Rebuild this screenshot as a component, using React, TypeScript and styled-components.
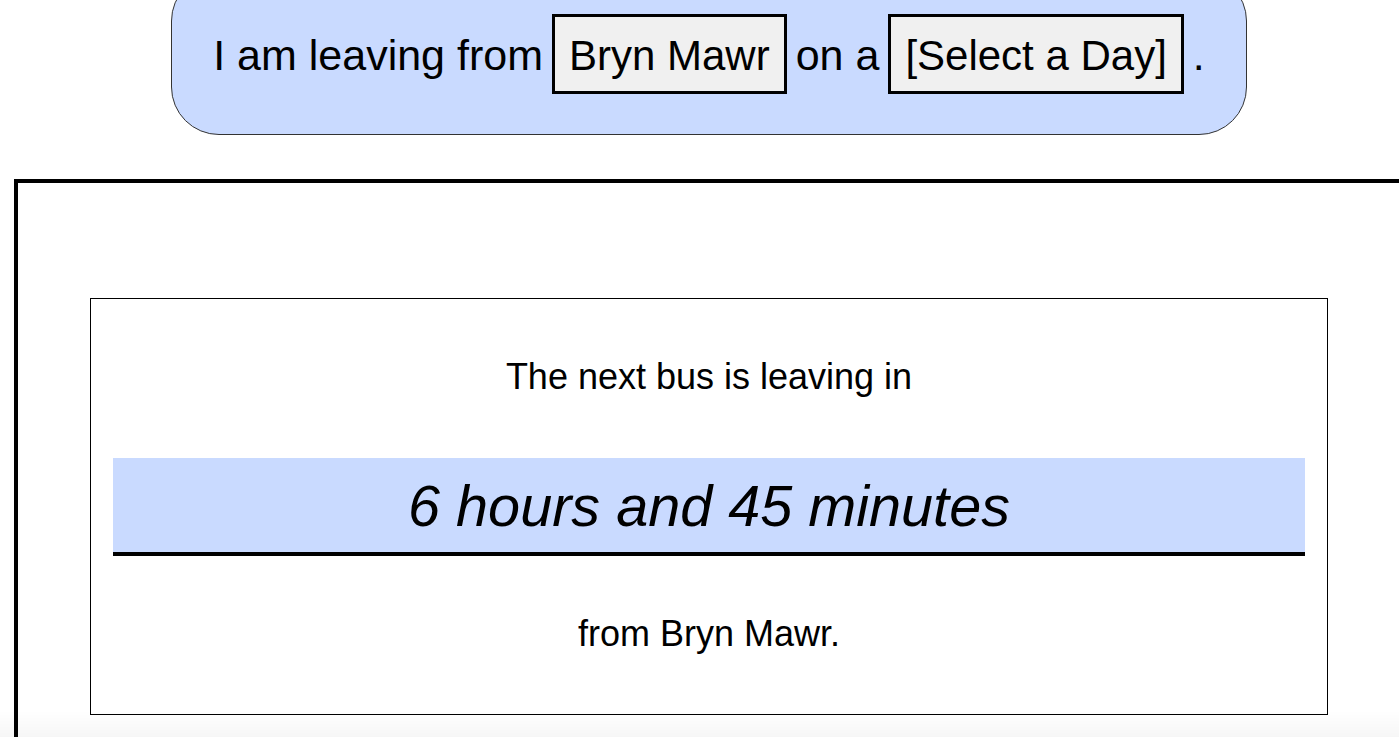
import React from "react";
import styled, { createGlobalStyle } from "styled-components";

const GlobalStyle = createGlobalStyle`
  html, body {
    margin: 0;
    padding: 0;
    overflow: hidden;
    background: #ffffff;
  }
  body {
    font-family: "Liberation Sans", Arial, sans-serif;
    color: #000;
  }
`;

const Page = styled.div`
  width: 1390px;
  margin-left: 14px;
  display: flex;
  flex-direction: column;
  align-items: center;
`;

const Pill = styled.div`
  width: 1076px;
  box-sizing: border-box;
  margin-top: -27px;
  padding: 40px 0;
  background: #c9daff;
  border: 1px solid #333;
  border-radius: 48px;
  display: flex;
  justify-content: center;
  align-items: baseline;
  gap: 9px;
  font-size: 43px;
`;

const Words = styled.span`
  white-space: pre;
`;

const Choice = styled.span`
  display: inline-block;
  box-sizing: border-box;
  height: 80px;
  padding: 15px 14px 0 14px;
  border: 3px solid #000;
  background: #f0f0f0;
  font-size: 42px;
  white-space: pre;
`;

const Panel = styled.div`
  align-self: stretch;
  margin-top: 44px;
  border: 4px solid #000;
  padding: 115px 72px 40px;
`;

const Card = styled.div`
  border: 1px solid #000;
  padding: 57px 22px 59px;
  display: flex;
  flex-direction: column;
  align-items: stretch;
`;

const Line = styled.p<{ $gap?: number }>`
  margin: ${(p) => p.$gap ?? 0}px 0 0;
  font-size: 36px;
  text-align: center;
`;

const Countdown = styled.div`
  margin-top: 60px;
  background: #c9daff;
  border-bottom: 4px solid #000;
  padding: 15px 0 13px;
  font-size: 57.6px;
  font-style: italic;
  text-align: center;
`;

const BottomShade = styled.div`
  position: fixed;
  left: 0;
  right: 0;
  bottom: 0;
  height: 26px;
  pointer-events: none;
  background: linear-gradient(to bottom, rgba(0, 0, 0, 0), rgba(0, 0, 0, 0.035));
`;

export default function App() {
  return (
    <>
      <GlobalStyle />
      <Page>
        <Pill>
          <Words>I am leaving from</Words>
          <Choice>Bryn Mawr</Choice>
          <Words>on a</Words>
          <Choice>[Select a Day]</Choice>
          <Words>.</Words>
        </Pill>
        <Panel>
          <Card>
            <Line>The next bus is leaving in</Line>
            <Countdown>6 hours and 45 minutes</Countdown>
            <Line $gap={57}>from Bryn Mawr.</Line>
          </Card>
        </Panel>
      </Page>
      <BottomShade />
    </>
  );
}
